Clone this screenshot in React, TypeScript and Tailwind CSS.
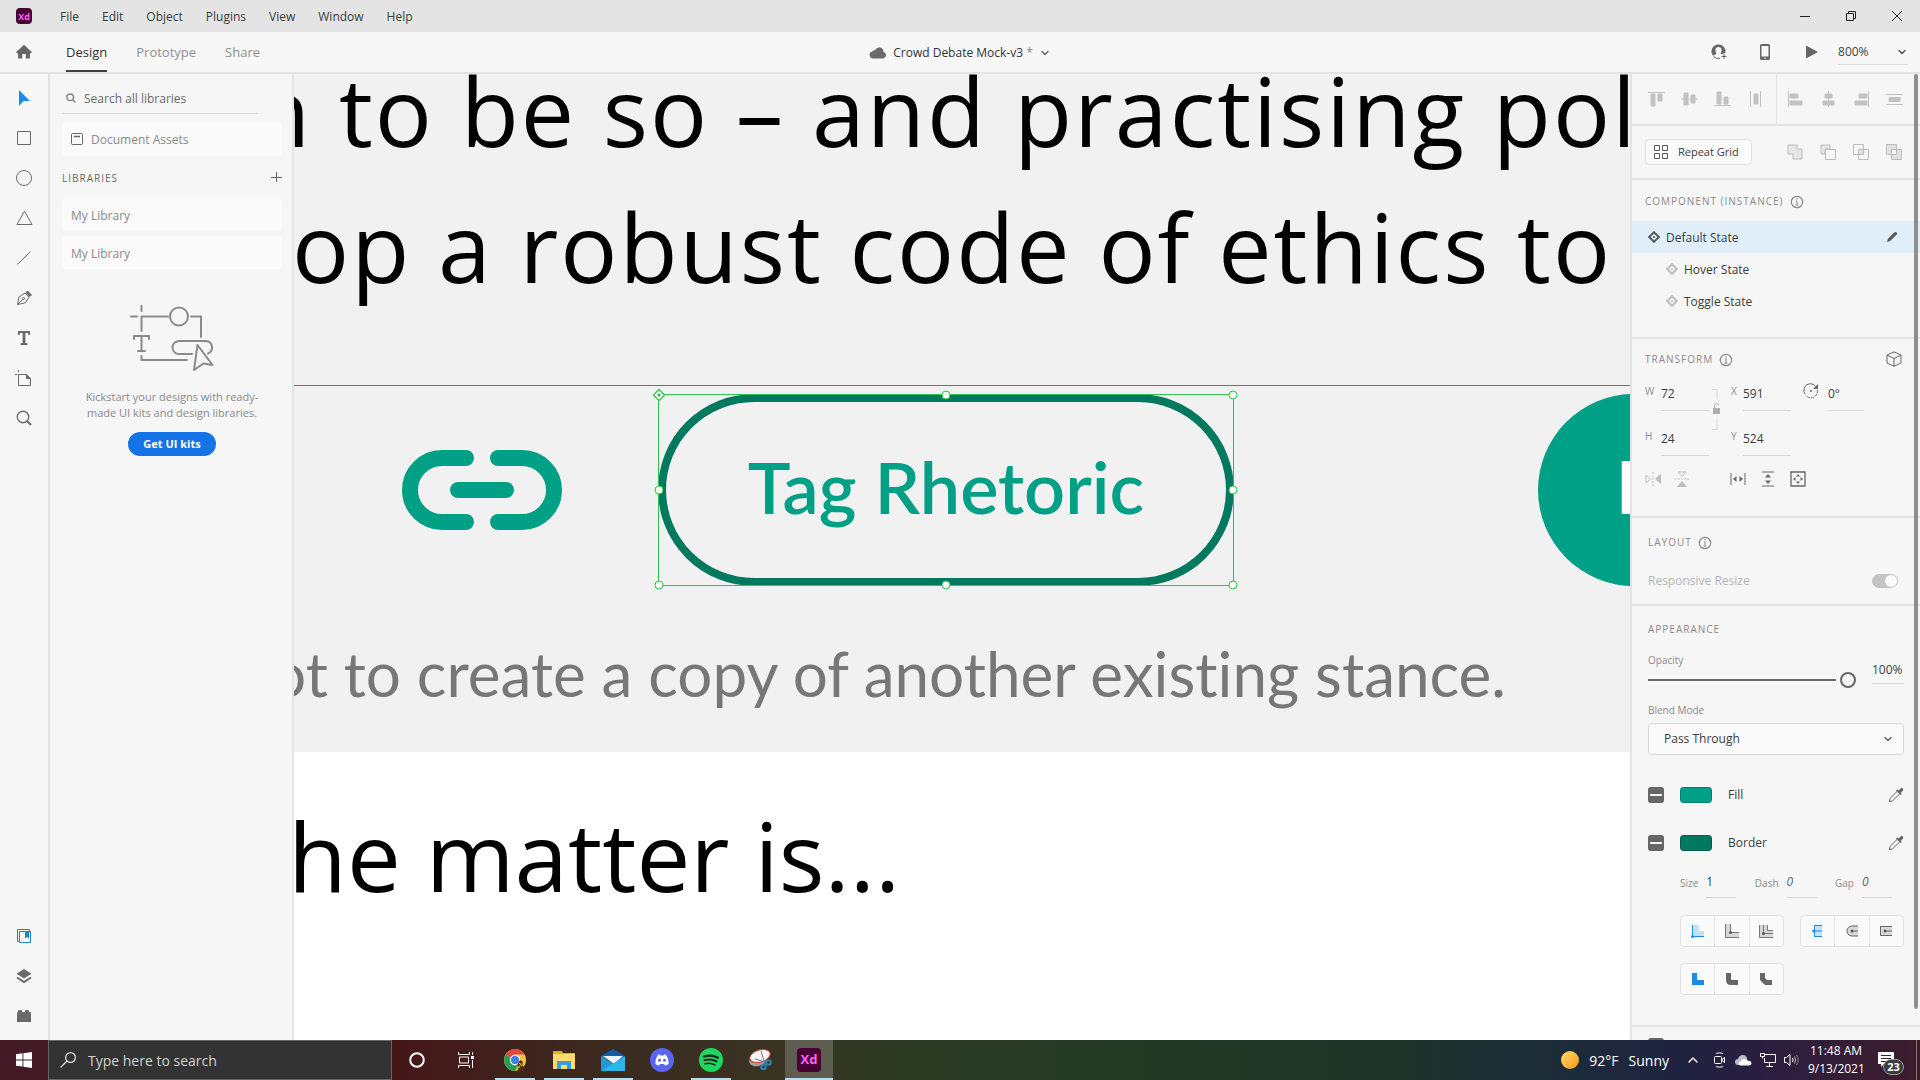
import type { ReactNode } from "react";
import { ChevronDown, ChevronUp } from "lucide-react";

const menus = ["File", "Edit", "Object", "Plugins", "View", "Window", "Help"];

function Info() {
  return (
    <svg className="w-3.5 h-3.5 text-[#8a8a8a]" viewBox="0 0 14 14" fill="none" stroke="currentColor">
      <circle cx="7" cy="7" r="5.7" strokeWidth="1.2" />
      <path d="M6 6h1v4M5.500 10h3" />
      <path d="M6.300 3.900h1.300" strokeWidth="1.300" />
    </svg>
  );
}

function Diamond({ className }: { className: string }) {
  return (
    <svg className={`w-3 h-3 ${className}`} viewBox="0 0 12 12" fill="none" stroke="currentColor">
      <path d="M6 1.200 10.800 6 6 10.800 1.200 6Z" strokeWidth="2" />
      <circle cx="6" cy="6" r="1.100" fill="currentColor" stroke="none" />
    </svg>
  );
}

function XdLogo({ className }: { className: string }) {
  return (
    <span className={`flex items-center justify-center bg-[#470137] text-[#ff61f6] font-bold ${className}`}>Xd</span>
  );
}

function Tool({ label, children }: { label: string; children: ReactNode }) {
  return (
    <button type="button" aria-label={label} className="w-12 h-10 flex items-center justify-center text-[#6a6a6a]">
      <svg className="w-4 h-4 overflow-visible" viewBox="0 0 16 16" fill="none" stroke="currentColor">
        {children}
      </svg>
    </button>
  );
}

function TitleBar() {
  return (
    <header className="h-8 shrink-0 bg-[#e4e4e4] flex items-center pl-4 text-xs text-[#3c3c3c]">
      <XdLogo className="w-4 h-4 rounded-sm text-[9px] leading-none mr-7" />
      <nav className="flex gap-[23px] pt-0.5">
        {menus.map((m) => (
          <button key={m} type="button">{m}</button>
        ))}
      </nav>
      <div className="ml-auto flex text-[#222]">
        <button type="button" aria-label="Minimize" className="w-[46px] h-8 flex items-center justify-center">
          <svg className="w-3 h-3" viewBox="0 0 12 12" stroke="currentColor"><path d="M1 6.500h10" /></svg>
        </button>
        <button type="button" aria-label="Restore" className="w-[46px] h-8 flex items-center justify-center">
          <svg className="w-3 h-3" viewBox="0 0 12 12" fill="none" stroke="currentColor">
            <path d="M1.500 3.500h7v7h-7zM3.500 3.500v-2h7v7h-2" />
          </svg>
        </button>
        <button type="button" aria-label="Close" className="w-[46px] h-8 flex items-center justify-center">
          <svg className="w-3 h-3" viewBox="0 0 12 12" stroke="currentColor"><path d="m1 1 10 10M11 1 1 11" /></svg>
        </button>
      </div>
    </header>
  );
}

function TopBar() {
  return (
    <div className="h-[42px] shrink-0 bg-[#f7f7f7] border-b-2 border-[#e3e3e3] flex justify-between">
      <div className="flex flex-1">
        <button type="button" aria-label="Home" className="w-12 flex items-center justify-center mr-[18px]">
          <svg className="w-4 h-4" viewBox="0 0 16 16" fill="#666">
            <path d="M8 .8 0 8.200l.8.8H2v5.600h4.200V10h3.600v4.600H14V9h1.200l.8-.8L13 5.400z" />
          </svg>
        </button>
        <div className="flex gap-[29px] text-[13px] text-[#8f8f8f]">
          <button type="button" className="text-[#333] border-b-2 border-[#3f3f3f] pt-1">Design</button>
          <button type="button" className="pt-0.5">Prototype</button>
          <button type="button" className="pt-0.5">Share</button>
        </div>
      </div>
      <button type="button" className="flex items-center gap-1.5 ml-3 pt-0.5 text-xs text-[#333]">
        <svg className="w-[18px] h-3.5" viewBox="0 0 18 14" fill="#6a6a6a">
          <path d="M4 12.500A3.500 3.500 0 0 1 3.300 5.600 3 3 0 0 1 6.200 4 4.300 4.300 0 0 1 14.400 5.700 3.500 3.500 0 0 1 14.300 12.500Z" />
        </svg>
        <span>Crowd Debate Mock-v3 <span className="text-[#888]">*</span></span>
        <ChevronDown className="w-3 h-3 text-[#666]" strokeWidth={3} />
      </button>
      <div className="flex flex-1 justify-end items-center text-[#666] pr-3">
        <button type="button" aria-label="Invite" className="mr-[33px]">
          <svg className="w-4 h-4 overflow-visible" viewBox="0 0 16 16" fill="none" stroke="currentColor">
            <path d="M7.500.5a7 7 0 0 0-5.600 11.200c1-.9 2.700-1 3.300-1.700.5-.6-.8-1.500-.8-4 0-2 1.400-3 3.100-3s3.100 1 3.100 3c0 2.500-1.300 3.400-.8 4H12l2.500-1.500A7 7 0 0 0 7.500.5Z" fill="currentColor" stroke="none" />
            <path d="M2.500 12.500A7 7 0 0 0 9 14.300M13 10v5M10.500 12.500h5" />
          </svg>
        </button>
        <button type="button" aria-label="Preview on device" className="mr-9">
          <svg className="w-2.5 h-4" viewBox="0 0 10 16" fill="currentColor">
            <path fillRule="evenodd" d="M1.500 0h7Q10 0 10 1.500v13Q10 16 8.500 16h-7Q0 16 0 14.500v-13Q0 0 1.500 0ZM1.500 2v10.500h7V2Z" />
            <circle cx="5" cy="14.200" r=".8" fill="#fff" />
          </svg>
        </button>
        <button type="button" aria-label="Play" className="mr-5">
          <svg className="w-3 h-3.5" viewBox="0 0 12 14" fill="currentColor"><path d="M0 .5 12 7 0 13.500Z" /></svg>
        </button>
        <button type="button" className="w-[70px] flex justify-between items-center border-b border-[#ddd] pt-1 pb-1 text-xs text-[#444]">
          800%
          <ChevronDown className="w-3 h-3" strokeWidth={2.5} />
        </button>
      </div>
    </div>
  );
}

function ToolStrip() {
  return (
    <aside className="w-[50px] shrink-0 bg-[#f7f7f7] border-r-2 border-[#e3e3e3] flex flex-col pt-1">
      <Tool label="Select"><path d="M3 0v16l4.500-5H14Z" fill="#1b8ce3" stroke="none" /></Tool>
      <Tool label="Rectangle"><path d="M1.500 1.500h13v13h-13z" /></Tool>
      <Tool label="Ellipse"><circle cx="8" cy="8" r="7.500" /></Tool>
      <Tool label="Polygon"><path d="M8.500 1.200 16 14.500H.9Z" /></Tool>
      <Tool label="Line"><path d="M1.500 14.500 14.500 1.500" /></Tool>
      <Tool label="Pen">
        <path d="M1.500 14.500 3 7l6-4 4 4.200-3.700 5.600ZM1.500 14.500 7 9" />
        <circle cx="7.500" cy="8.500" r="1" />
        <path d="m9.500 2.500 2-2L16 5l-2.200 2Z" fill="currentColor" stroke="none" />
      </Tool>
      <Tool label="Text"><path d="M2 1h12v4h-1.500L12 3H9.400v10l2.100.5V15H4.500v-1.500l2.100-.5V3H4l-.5 2H2Z" fill="currentColor" stroke="none" /></Tool>
      <Tool label="Artboard">
        <path d="M2.500 4.500h8l4 4v7h-12zM-1 4.500h2M2.500 0v2" />
        <path d="M10.500 4.500v4h4Z" fill="currentColor" />
      </Tool>
      <Tool label="Zoom"><circle cx="7" cy="7" r="5.700" strokeWidth="1.400" /><path d="m11 11 4 4" strokeWidth="2" /></Tool>
      <div className="mt-auto pb-1">
        <Tool label="Libraries">
          <path d="M3.500 13.500h-2v-12h12v2M3.500 3.500h11v11h-11z" stroke="#1d85c9" />
          <path d="M9 3.500h4v7l-2-1.500-2 1.500Z" fill="#1d85c9" stroke="none" />
        </Tool>
        <Tool label="Layers">
          <path d="M8 1 15.500 5.800 8 10.600.5 5.800Z" fill="currentColor" stroke="none" />
          <path d="m1 9.500 7 4.500 7-4.500" strokeWidth="2" />
        </Tool>
        <Tool label="Plugins">
          <path d="M1 5q0-1 1-1V3q0-1 1-1h2q1 0 1 1v1h3V3q0-1 1-1h2q1 0 1 1v1h1q1 0 1 1v9H1Z" fill="currentColor" stroke="none" />
        </Tool>
      </div>
    </aside>
  );
}

function LibrariesPanel() {
  return (
    <aside className="w-[244px] shrink-0 bg-[#f6f6f6] border-r-2 border-[#e3e3e3] pl-3 pr-2.5 pt-2 text-xs text-[#8a8a8a]">
      <label className="h-8 w-[196px] flex items-center gap-2 border-b border-[#dcdcdc] pl-1">
        <svg className="w-2.5 h-2.5 shrink-0" viewBox="0 0 10 10" fill="none" stroke="#888" strokeWidth="1.500">
          <circle cx="4.200" cy="4.200" r="3.300" /><path d="M6.500 6.500 9.500 9.500" />
        </svg>
        <input aria-label="Search" placeholder="Search all libraries" className="w-full pt-0.5 bg-transparent outline-none placeholder:text-[#6a6a6a]" />
      </label>
      <button type="button" className="mt-2 w-full h-[34px] rounded bg-[#fafafa] flex items-center gap-2 pl-[9px]">
        <svg className="w-3 h-3" viewBox="0 0 12 12" fill="none" stroke="#666">
          <rect x=".5" y=".5" width="11" height="11" rx="1" /><path d="M3 3.500h6" strokeWidth="1.500" />
        </svg>
        <span className="pt-0.5">Document Assets</span>
      </button>
      <div className="h-[42px] flex items-center justify-between">
        <h2 className="pt-1 text-[10px] tracking-widest text-[#6a6a6a]">LIBRARIES</h2>
        <button type="button" aria-label="Add library">
          <svg className="w-3 h-3" viewBox="0 0 12 12" stroke="#666"><path d="M6.500 1v10M1 6.500h11" /></svg>
        </button>
      </div>
      <div className="flex flex-col gap-[5px]">
        <button type="button" className="h-[33px] rounded bg-[#fafafa] text-left pl-[9px] pt-0.5">My Library</button>
        <button type="button" className="h-[33px] rounded bg-[#fafafa] text-left pl-[9px] pt-0.5">My Library</button>
      </div>
      <div className="mt-9 flex flex-col items-center">
        <svg className="w-[84px] h-[66px]" viewBox="0 0 84 66" fill="none" stroke="#8a8a8a" strokeWidth="2" strokeLinecap="round" strokeLinejoin="round">
          <path d="M11.500 1v5M1 11.500h6M11.500 26V11.500H38M61 11.500h10V32M11.500 51v4H57" />
          <circle cx="49" cy="11.500" r="9" />
          <path d="M4 34v-3h15v3M11.500 31v15M8 46h7" />
          <path d="M62 49H49a6.500 6.500 0 0 1 0-13h27a6.500 6.500 0 0 1 2 12.500" />
          <path d="M67.500 40 82.500 60l-9-1.500L64 65Z" fill="#f6f6f6" />
        </svg>
        <p className="mt-[18px] text-[11px] leading-4 text-center">
          Kickstart your designs with ready-<br />made UI kits and design libraries.
        </p>
        <button type="button" className="mt-[11px] h-6 px-[15px] rounded-full bg-[#1473e6] text-white text-[11px] font-bold">Get UI kits</button>
      </div>
    </aside>
  );
}

const handles = [
  "left-1/2 top-0",
  "left-full top-0",
  "left-0 top-1/2",
  "left-full top-1/2",
  "left-0 top-full",
  "left-1/2 top-full",
  "left-full top-full",
];

function Canvas() {
  return (
    <main className="relative flex-1 min-w-0 overflow-hidden bg-white whitespace-pre">
      <div className="absolute inset-x-0 top-0 h-[678px] bg-[#f1f1f1]" />
      <div className="absolute inset-x-0 top-[311px] h-px bg-[#3480c4]" />
      <p className="absolute left-[-42px] top-[-32px] text-[95px] leading-[136px] tracking-[2px] text-black">
        {"n to be so – and practising politics"}
      </p>
      <p className="absolute left-[-2px] top-[104px] text-[95px] leading-[136px] tracking-[2px] text-black">
        {"op a robust code of ethics to"}
      </p>
      <p className="absolute left-[-6px] top-[713px] text-[96px] leading-[136px] text-black">he matter is...</p>

      <svg className="absolute left-[108px] top-[376px] w-40 h-20" viewBox="0 0 160 80" fill="none" stroke="#00a087" strokeWidth="16" strokeLinecap="round">
        <path d="M64 8H40a32 32 0 0 0 0 64h24M96 8h24a32 32 0 0 1 0 64H96M56 40h48" />
      </svg>

      <div className="absolute left-[364px] top-80 w-[576px] h-48 rounded-full border-8 border-[#00795f] flex items-center justify-center pb-2 font-[Lato] font-semibold text-[72px] leading-none text-[#00a087]">
        Tag Rhetoric
      </div>
      <div className="absolute left-[364px] top-80 w-[576px] h-[192px] border border-[#2fc34b]">
        {handles.map((h) => (
          <span key={h} className={`absolute ${h} -translate-1/2 w-[9px] h-[9px] rounded-full bg-white border border-[#2fc34b]`} />
        ))}
        <svg className="absolute left-0 top-0 -translate-1/2 w-3.5 h-3.5" viewBox="0 0 14 14" fill="#fff" stroke="#2fc34b" strokeWidth="1.300">
          <path d="M7 1.500 12.500 7 7 12.500 1.500 7Z" /><circle cx="7" cy="7" r="1" fill="#2fc34b" />
        </svg>
      </div>

      <div className="absolute left-[1244px] top-80 w-[576px] h-48 rounded-full bg-[#00a087] flex items-center pl-[78px] pb-2 font-[Lato] font-bold text-[72px] leading-none text-white">
        Reply
      </div>
      <p className="absolute right-[124px] top-[551px] font-[Lato] text-[62px] leading-[96px] text-[#777] [font-variant-ligatures:none]">
        not to create a copy of another existing stance.
      </p>
    </main>
  );
}

const alignV = [
  { label: "Align top", d: "M0 1.500h17M3 3h4v12H3zM10 3h4v7h-4z" },
  { label: "Align middle", d: "M0 8h17M3 2h4v12H3zM10 4h4v8h-4z" },
  { label: "Align bottom", d: "M0 14.500h17M3 1h4v12H3zM10 6h4v7h-4z" },
  { label: "Distribute horizontally", d: "M3.500 0v16M13.500 0v16M7 3h4v10H7z" },
];
const alignH = [
  { label: "Align left", d: "M1.500 0v16M3 3h8v4H3zM3 10h12v4H3z" },
  { label: "Align center", d: "M8.500 0v16M5 3h7v4H5zM3 10h11v4H3z" },
  { label: "Align right", d: "M15.500 0v16M6 3h8v4H6zM2 10h12v4H2z" },
  { label: "Distribute vertically", d: "M0 3.500h17M0 13.500h17M3 6.500h11v4H3z" },
];

function AlignGroup({ items }: { items: { label: string; d: string }[] }) {
  return (
    <div className="flex gap-4">
      {items.map((i) => (
        <button key={i.label} type="button" aria-label={i.label}>
          <svg className="w-[17px] h-4" viewBox="0 0 17 16" fill="#c2c2c2" stroke="#c2c2c2"><path d={i.d} /></svg>
        </button>
      ))}
    </div>
  );
}

function Field({ label, value, labelWidth }: { label: string; value: string; labelWidth: string }) {
  return (
    <label className="flex items-start text-[10px] leading-4 text-[#8f8f8f]">
      <span className={`shrink-0 ${labelWidth}`}>{label}</span>
      <input defaultValue={value} className="w-12 h-7 pb-1.5 bg-transparent border-b border-[#d8d8d8] outline-none text-xs text-[#3c3c3c]" />
    </label>
  );
}

function PaintRow({ label, swatch }: { label: string; swatch: string }) {
  return (
    <div className="h-12 flex items-center">
      <label className="flex items-center gap-4 text-xs text-[#3c3c3c]">
        <span className="relative w-4 h-4 rounded-[3px] bg-[#666] flex items-center justify-center">
          <input type="checkbox" defaultChecked className="absolute inset-0 opacity-0" />
          <span className="w-3 h-0.5 bg-white" />
        </span>
        <span className={`w-8 h-4 rounded-sm border border-black/20 ${swatch}`} />
        {label}
      </label>
      <button type="button" aria-label={`Pick ${label.toLowerCase()} colour`} className="ml-auto">
        <svg className="w-4 h-4" viewBox="0 0 16 16" fill="none" stroke="#666">
          <path d="M9 4.500 2.200 11.300 1.300 14.700 4.700 13.800 11.500 7" />
          <path d="M8 3.500 9.200 2.400 10.500 3.600 12.500 1.500Q14 .5 15 1.600 15.800 2.600 14.700 3.900L12.700 5.800 13.700 7 12.500 8.100Z" fill="#666" stroke="none" />
        </svg>
      </button>
    </div>
  );
}

function DashField({ label, value, className }: { label: string; value: string; className: string }) {
  return (
    <label className="flex gap-2">
      {label}
      <input defaultValue={value} className={`w-[30px] h-7 pb-1 bg-transparent border-b border-[#d8d8d8] outline-none text-xs ${className}`} />
    </label>
  );
}

function IconGroup({ items }: { items: { label: string; icon: ReactNode }[] }) {
  return (
    <div className="flex h-8 w-[104px] rounded border border-[#e0e0e0] bg-[#fafafa] divide-x divide-[#e0e0e0]">
      {items.map((i) => (
        <button key={i.label} type="button" aria-label={i.label} className="flex-1 flex items-center justify-center">
          <svg className="w-3.5 h-3.5" viewBox="0 0 14 14" fill="none">{i.icon}</svg>
        </button>
      ))}
    </div>
  );
}

const strokeAlign = [
  { label: "Inner stroke", icon: <><path d="M1 1h7v6h5v6H1z" fill="#c5e1f7" /><path d="M1.500 1v11.500H13" stroke="#1b8ce3" /><circle cx="1.500" cy="12.500" r="1.500" fill="#1b8ce3" /></> },
  { label: "Outer stroke", icon: <><path d="M0 0h5v9h9v5H0z" fill="#d8d8d8" /><path d="M.5 0v13.500H14M5.500 0v8.500H14" stroke="#777" /><circle cx="5.500" cy="8.500" r="1.500" fill="#555" /></> },
  { label: "Center stroke", icon: <><path d="M0 1h8v5h6v8H0z" fill="#d8d8d8" /><path d="M.5 1v12.500H14M4.500 1v8.500H14M8.500 1v5.500H14" stroke="#777" /><circle cx="4.500" cy="9.500" r="1.500" fill="#555" /></> },
];
const caps = [
  { label: "Butt cap", icon: <><path d="M3 1h8v12H3z" fill="#c5e1f7" /><path d="M11 1.500H3.500v11H11M1 7h10" stroke="#1b8ce3" /><circle cx="3" cy="7" r="1.500" fill="#1b8ce3" /></> },
  { label: "Round cap", icon: <><path d="M13 2H7a5 5 0 0 0 0 10h6Z" fill="#d8d8d8" /><path d="M13 2H7a5 5 0 0 0 0 10h6M7 7h6" stroke="#666" /><circle cx="7" cy="7" r="1.500" fill="#555" /></> },
  { label: "Projecting cap", icon: <><path d="M1 2h12v10H1z" fill="#d8d8d8" /><path d="M13 2.500H1.500v9H13M6 7h7" stroke="#666" /><circle cx="6" cy="7" r="1.500" fill="#555" /></> },
];
const joins = [
  { label: "Miter join", icon: <path d="M1 1h5v7h7v5H1z" fill="#1b8ce3" /> },
  { label: "Round join", icon: <path d="M1 1h5v6q0 1 1 1h6v5H6q-5 0-5-5z" fill="#666" /> },
  { label: "Bevel join", icon: <path d="M1 1h5v5l2 2h5v5H6L1 8z" fill="#666" /> },
];

function PropertyPanel() {
  const heading = "flex items-center gap-1.5 pt-0.5 text-[10px] tracking-widest text-[#8a8a8a]";
  return (
    <aside className="relative w-[290px] shrink-0 overflow-hidden bg-[#f6f6f6] border-l-2 border-[#e3e3e3] text-xs text-[#3c3c3c]">
      <div className="h-[52px] border-b-2 border-[#e3e3e3] flex items-center">
        <div className="w-[145px] h-full border-r border-[#e3e3e3] flex items-center pl-4"><AlignGroup items={alignV} /></div>
        <div className="pl-2.5"><AlignGroup items={alignH} /></div>
      </div>

      <div className="h-[54px] border-b-2 border-[#e3e3e3] flex items-center justify-between pl-[13px] pr-[18px]">
        <button type="button" className="h-[26px] w-[107px] rounded border border-[#dedede] bg-[#fbfbfb] flex items-center gap-2.5 pl-2 text-[11px]">
          <svg className="w-3.5 h-3.5" viewBox="0 0 14 14" fill="none" stroke="#555">
            <path d="M.5.5h5v5h-5zM8.500.5h5v5h-5zM.5 8.500h5v5h-5zM8.500 8.500h5v5h-5z" />
          </svg>
          Repeat Grid
        </button>
        <div className="flex gap-[17px]">
          <button type="button" aria-label="Add">
            <svg className="w-4 h-4" viewBox="0 0 16 16" fill="#e6e6e6" stroke="#bdbdbd"><path d="M1 1h9v4h5v10H6v-5H1z" /></svg>
          </button>
          <button type="button" aria-label="Subtract">
            <svg className="w-4 h-4" viewBox="0 0 16 16" fill="#e6e6e6" stroke="#bdbdbd"><path d="M1 1h9v4H5v5H1z" /><path d="M5.500 5.500h10v10h-10z" fill="none" /></svg>
          </button>
          <button type="button" aria-label="Intersect">
            <svg className="w-4 h-4" viewBox="0 0 16 16" fill="none" stroke="#bdbdbd"><path d="M.5.5h10v10H.5zM5.500 5.500h10v10h-10z" /><path d="M5.500 5.500h5v5h-5z" fill="#e0e0e0" /></svg>
          </button>
          <button type="button" aria-label="Exclude overlap">
            <svg className="w-4 h-4" viewBox="0 0 16 16" fill="#e0e0e0" stroke="#bdbdbd"><path d="M.5.5h10v10H.5zM5.500 5.500h10v10h-10z" /><path d="M5.500 5.500h5v5h-5z" fill="#f6f6f6" /></svg>
          </button>
        </div>
      </div>

      <section className="h-[159px] border-b-2 border-[#e3e3e3]">
        <h2 className={`${heading} h-[41px] pl-[13px]`}>COMPONENT (INSTANCE) <Info /></h2>
        <div className="h-8 bg-[#e0eefa] flex items-center pl-4 pr-[22px]">
          <Diamond className="text-[#5a5a5a] mr-1.5" />
          <span className="pt-0.5">Default State</span>
          <button type="button" aria-label="Edit main component" className="ml-auto">
            <svg className="w-3 h-3" viewBox="0 0 12 12" fill="#5a5a5a"><path d="M1 11 2 7.800 8.500 1.300Q9.500.5 10.700 1.400 11.700 2.500 10.700 3.500L4.200 10Z" /></svg>
          </button>
        </div>
        <div className="h-8 flex items-center pl-[34px]"><Diamond className="text-[#bdbdbd] mr-1.5" /><span className="pt-0.5">Hover State</span></div>
        <div className="h-8 flex items-center pl-[34px]"><Diamond className="text-[#bdbdbd] mr-1.5" /><span className="pt-0.5">Toggle State</span></div>
      </section>

      <section className="h-[179px] border-b-2 border-[#e3e3e3] pl-[13px] pr-[18px]">
        <div className="h-[38px] flex items-center justify-between pt-0.5">
          <h2 className={heading}>TRANSFORM <Info /></h2>
          <button type="button" aria-label="3D transforms">
            <svg className="w-4 h-4" viewBox="0 0 16 16" fill="none" stroke="#666">
              <path d="M8 .8 15 4v8l-7 3.300L1 12V4ZM1 4l7 3.500L15 4M8 7.500v7.800" />
            </svg>
          </button>
        </div>
        <div className="mt-1.5 flex">
          <div className="flex flex-col gap-[17px]">
            <Field label="W" value="72" labelWidth="w-4" />
            <Field label="H" value="24" labelWidth="w-4" />
          </div>
          <svg className="w-3 h-11 mt-1 mr-2 ml-0.5" viewBox="0 0 12 44" fill="none" stroke="#d8d8d8">
            <path d="M1 2.500h5v10M1 42.500h5v-10" />
            <rect x="2" y="21" width="7" height="6" fill="#b0b0b0" stroke="none" />
            <path d="M3.500 21v-2.500a2 2 0 0 1 4 0" stroke="#b0b0b0" />
          </svg>
          <div className="flex flex-col gap-[17px]">
            <Field label="X" value="591" labelWidth="w-3" />
            <Field label="Y" value="524" labelWidth="w-3" />
          </div>
          <label className="flex items-start ml-2.5">
            <svg className="w-4 h-4 mr-[9px] ml-0.5" viewBox="0 0 16 16" fill="none" stroke="#666">
              <path d="M2 11A6.500 6.500 0 0 1 13 3.700" />
              <path d="M14.300 7A6.500 6.500 0 0 1 3 12.500" strokeDasharray="3 1" />
              <path d="M15 1v5h-5Z" fill="#666" stroke="none" />
              <circle cx="8" cy="8" r="1" fill="#666" stroke="none" />
            </svg>
            <input aria-label="Rotation" defaultValue="0°" className="w-9 h-7 pb-1.5 bg-transparent border-b border-[#d8d8d8] outline-none" />
          </label>
        </div>
        <div className="mt-[15px] flex items-center">
          <button type="button" aria-label="Flip horizontally" className="mr-[13px]">
            <svg className="w-4 h-4" viewBox="0 0 16 16" fill="none" stroke="#bdbdbd"><path d="M1 4v8l4.500-4Z" /><path d="M15.500 3.500v9L10.500 8Z" fill="#bdbdbd" /><path d="M8 1v14" strokeDasharray="2 1" /></svg>
          </button>
          <button type="button" aria-label="Flip vertically" className="mr-10">
            <svg className="w-4 h-4" viewBox="0 0 16 16" fill="none" stroke="#bdbdbd"><path d="M4 1h8L8 5.500Z" /><path d="M3.500 15.500h9L8 10.500Z" fill="#bdbdbd" /><path d="M1 8h14" strokeDasharray="2 1" /></svg>
          </button>
          <button type="button" aria-label="Fixed width" className="mr-3.5">
            <svg className="w-4 h-4" viewBox="0 0 16 16" fill="#666" stroke="#666"><path d="M1 2v12M15 2v12" /><path d="M6.500 5v6L3 8ZM9.500 5v6L13 8Z" stroke="none" /></svg>
          </button>
          <button type="button" aria-label="Fixed height" className="mr-3.5">
            <svg className="w-4 h-4" viewBox="0 0 16 16" fill="#666" stroke="#666"><path d="M2 1h12M2 15h12" /><path d="M5 6.500h6L8 3ZM5 9.500h6L8 13Z" stroke="none" /></svg>
          </button>
          <button type="button" aria-label="Fit content">
            <svg className="w-4 h-4" viewBox="0 0 16 16" fill="#666" stroke="#666"><path d="M1 1h14v14H1z" fill="none" strokeWidth="1.300" /><path d="M6 5.500h4L8 3ZM6 10.500h4L8 13ZM5.500 6v4L3 8ZM10.500 6v4L13 8Z" stroke="none" /></svg>
          </button>
        </div>
      </section>

      <section className="h-[88px] border-b-2 border-[#e3e3e3] pl-4 pr-[22px]">
        <h2 className={`${heading} h-12`}>LAYOUT <Info /></h2>
        <label className="h-[30px] flex items-center justify-between text-[#b5b5b5]">
          Responsive Resize
          <span className="relative w-[26px] h-3.5 rounded-full bg-[#c4c4c4] border border-[#c4c4c4] flex justify-end items-center">
            <input type="checkbox" disabled defaultChecked className="absolute inset-0 opacity-0" />
            <span className="w-3 h-3 rounded-full bg-[#fafafa]" />
          </span>
        </label>
      </section>

      <section className="h-[421px] border-b-2 border-[#e3e3e3] pl-4 pr-4">
        <h2 className={`${heading} h-[46px]`}>APPEARANCE</h2>
        <div className="flex justify-between text-[10px] text-[#8a8a8a]">
          <label className="w-[208px]">
            <span className="block leading-4">Opacity</span>
            <span className="relative flex items-center h-6">
              <span className="w-[188px] h-0.5 bg-[#6a6a6a]" />
              <span className="ml-1 w-4 h-4 rounded-full border-2 border-[#666]" />
              <input type="range" defaultValue={100} className="absolute inset-0 opacity-0" />
            </span>
          </label>
          <input aria-label="Opacity value" defaultValue="100%" className="mt-1 w-8 h-7 bg-transparent border-b border-[#d8d8d8] outline-none text-xs text-[#3c3c3c]" />
        </div>
        <label className="relative block mt-2 text-[10px] leading-5 text-[#8a8a8a]">
          Blend Mode
          <select className="block appearance-none w-full h-8 mt-[3px] rounded border border-[#d8d8d8] bg-[#fafafa] pl-[15px] text-xs text-[#3c3c3c]">
            <option>Pass Through</option>
          </select>
          <ChevronDown className="absolute right-2.5 bottom-2.5 w-3 h-3 text-[#555]" strokeWidth={2.5} />
        </label>
        <div className="mt-4">
          <PaintRow label="Fill" swatch="bg-[#00a087]" />
          <PaintRow label="Border" swatch="bg-[#00795f]" />
        </div>
        <div className="mt-[3px] pl-8 pr-3 flex justify-between text-[10px] leading-[26px] text-[#8a8a8a]">
          <DashField label="Size" value="1" className="text-[#3c3c3c]" />
          <DashField label="Dash" value="0" className="italic text-[#666]" />
          <DashField label="Gap" value="0" className="italic text-[#666]" />
        </div>
        <div className="mt-[17px] pl-8 flex flex-wrap gap-4">
          <IconGroup items={strokeAlign} />
          <IconGroup items={caps} />
          <IconGroup items={joins} />
        </div>
      </section>
      <div className="ml-4 mt-[11px] w-4 h-4 rounded-[3px] bg-[#666]" />
      <div className="absolute right-0.5 top-0 bottom-[31px] w-1 rounded-full bg-[#8f8f8f]" />
    </aside>
  );
}

function TaskApp({ label, open, active, children }: { label: string; open?: boolean; active?: boolean; children: ReactNode }) {
  return (
    <button
      type="button"
      aria-label={label}
      className={`relative w-12 mr-px h-full flex items-center justify-center ${active ? "bg-white/20" : ""}`}
    >
      {children}
      {open && <span className={`absolute bottom-0 h-0.5 bg-[#b3dcf5] ${active ? "inset-x-0" : "inset-x-1"}`} />}
    </button>
  );
}

function Taskbar() {
  return (
    <footer className="h-10 shrink-0 flex bg-[linear-gradient(90deg,#451a28_0%,#451818_21%,#3a2b20_32%,#3a3322_40%,#2d3b24_47%,#223a25_60%,#1e3328_72%,#1b2c38_81%,#1e2440_87%,#2b1e40_92%,#3d1c2c_100%)] text-white">
      <button type="button" aria-label="Start" className="w-12 flex items-center justify-center">
        <svg className="w-4 h-4" viewBox="0 0 16 16" fill="#fff"><path d="M0 2.200 6.500 1.300v6.200H0ZM7.400 1.200 16 0v7.500H7.400ZM0 8.400h6.500v6.200L0 13.700ZM7.400 8.400H16V16l-8.600-1.200Z" /></svg>
      </button>
      <label className="w-[344px] mr-px border border-[#666] bg-[#333] flex items-center pl-[11px] gap-3">
        <svg className="w-4 h-4 shrink-0" viewBox="0 0 16 16" fill="none" stroke="#e0e0e0" strokeWidth="1.200"><circle cx="10.500" cy="5.500" r="4.900" /><path d="M7 9 .5 15.500" /></svg>
        <input aria-label="Search Windows" placeholder="Type here to search" className="w-full bg-transparent outline-none text-[14px] placeholder:text-[#d0d0d0]" />
      </label>
      <TaskApp label="Cortana">
        <svg className="w-4 h-4" viewBox="0 0 16 16" fill="none" stroke="#fff" strokeWidth="2"><circle cx="8" cy="8" r="6.800" /></svg>
      </TaskApp>
      <TaskApp label="Task view">
        <svg className="w-4 h-4" viewBox="0 0 16 16" fill="none" stroke="#fff"><path d="M.5 0v2.500h11V0M.5 16v-2.500h11V16M1.500 5h9v6h-9zM14.500 0v3M14.500 8v8" /><path d="M13 4h3v3h-3z" fill="#fff" stroke="none" /></svg>
      </TaskApp>
      <TaskApp label="Chrome" open>
        <svg className="w-6 h-6" viewBox="0 0 24 24">
          <circle cx="12" cy="12" r="11" fill="#f6c33c" />
          <path d="M12 12 2.500 6.500A11 11 0 0 1 21.500 6.500H12Z" fill="#dc4b3e" />
          <path d="M2.500 6.500A11 11 0 0 0 12 23l4.500-8L12 12Z" fill="#2a9d55" />
          <circle cx="12" cy="12" r="5.200" fill="#fff" /><circle cx="12" cy="12" r="4.200" fill="#3f7fe8" />
          <path d="M17 12l3 2-1 3 2 2-1 4-2-2-2 3-2-1 2-4-2-2Z" fill="#4a3210" /><path d="m16 15 3 3m-1-3-2 5" stroke="#d8a33a" />
        </svg>
      </TaskApp>
      <TaskApp label="File Explorer" open>
        <svg className="w-6 h-6" viewBox="0 0 24 24"><path d="M1 3h9l1 2h12v15H1Z" fill="#e8a823" /><path d="M1 6h22v15H1Z" fill="#fddb6e" /><path d="M5 21v-8h14v8h-4v-4H9v4Z" fill="#3a9be0" /></svg>
      </TaskApp>
      <TaskApp label="Mail" open>
        <svg className="w-6 h-6" viewBox="0 0 24 24"><path d="M0 8 12 1l12 7v3H0Z" fill="#0f5cab" /><path d="M2 8h20l-9 8Z" fill="#f2f5f8" /><path d="m0 8 13 8-13 7Z" fill="#2396dc" /><path d="M24 8 0 23h24Z" fill="#2fb2ee" /></svg>
      </TaskApp>
      <TaskApp label="Discord">
        <svg className="w-6 h-6" viewBox="0 0 24 24"><circle cx="12" cy="12" r="12" fill="#5865f2" /><path d="M8 6.800 10 6.500l.5 1h3l.5-1 2 .3q3 4.500 2.700 9Q17 17.400 15 17.500l-1-1.500h-4l-1 1.500q-2-.1-3.700-1.700Q5 11 8 6.800Z" fill="#fff" /><circle cx="9.500" cy="12.300" r="1.500" fill="#5865f2" /><circle cx="14.500" cy="12.300" r="1.500" fill="#5865f2" /></svg>
      </TaskApp>
      <TaskApp label="Spotify" open>
        <svg className="w-6 h-6" viewBox="0 0 24 24" fill="none" stroke="#17241b" strokeLinecap="round"><circle cx="12" cy="12" r="12" fill="#1ed760" stroke="none" /><path d="M5 8.500q7.500-2.200 14 1.300" strokeWidth="2.200" /><path d="M5.500 12.200q6.500-1.800 12 1.200" strokeWidth="1.900" /><path d="M6 15.700q5.500-1.400 10 1.100" strokeWidth="1.500" /></svg>
      </TaskApp>
      <TaskApp label="Snipping Tool">
        <svg className="w-6 h-6" viewBox="0 0 24 24" fill="none"><ellipse cx="10" cy="12" rx="9" ry="6" transform="rotate(-18 10 12)" fill="#a89a98" /><ellipse cx="12" cy="8" rx="10.500" ry="6" transform="rotate(-18 12 8)" fill="#f4f4f4" stroke="#c8413f" /><path d="M13 3 17 16M7 11l10 3" stroke="#777" /><circle cx="15.500" cy="19" r="2.300" stroke="#2d83bd" strokeWidth="2" /><circle cx="20.500" cy="14.500" r="2.300" stroke="#2d83bd" strokeWidth="2" /></svg>
      </TaskApp>
      <TaskApp label="Adobe XD" open active><XdLogo className="w-6 h-6 rounded text-[13px]" /></TaskApp>

      <div className="ml-auto flex items-center pr-[3px]">
        <button type="button" className="flex items-center gap-2.5 text-[14px] mr-4">
          <span className="w-[18px] h-[18px] rounded-full bg-linear-to-br from-[#ffdc62] to-[#f99312]" />
          <span>92°F</span>
          <span>Sunny</span>
        </button>
        <button type="button" aria-label="Show hidden icons" className="mr-3"><ChevronUp className="w-4 h-4" strokeWidth={2} /></button>
        <svg className="w-3.5 h-4 mr-2" viewBox="0 0 14 16" fill="none" stroke="#fff"><rect x="1.500" y="4.500" width="7" height="7" rx="1" /><path d="m8.500 8 3-2.500v5ZM3 1.500q4-1.500 7 0M3 14.500q4 1.500 7 0" /></svg>
        <svg className="w-[17px] h-3 mr-2" viewBox="0 0 17 12"><path d="M3 11A3 3 0 0 1 3 5Q4 1 8 1q3 0 4 3l1 7Z" fill="#b8bcc4" /><path d="M5 11.500A2.500 2.500 0 0 1 5.500 7Q9 3.500 12 6.500 16.500 6.500 16.500 9.500 16 11.500 14 11.500Z" fill="#fff" /></svg>
        <svg className="w-4 h-4 mr-2" viewBox="0 0 16 16" fill="none" stroke="#fff"><path d="M5 2.500h10.500v8H4.500V6M9.500 10.500V14M6 14.500h7M.5 1.500h4v3h-4zM2.500 4.500v2" /></svg>
        <svg className="w-4 h-4 mr-2" viewBox="0 0 16 16" fill="none" stroke="#fff"><path d="M.5 5.500h2L6 2.500v11l-3.500-3h-2ZM8.500 6q1.200 2 0 4" /><path d="M10.500 4.500q2.300 3.500 0 7" stroke="#bbb" /><path d="M12.500 3q3.500 5 0 10" stroke="#888" /></svg>
        <div className="w-[56px] text-[12px] leading-[18px] text-center mr-3.5 whitespace-nowrap">
          <div>11:48 AM</div>
          <div>9/13/2021</div>
        </div>
        <button type="button" aria-label="Notifications" className="relative w-4 h-4 mr-[22px]">
          <svg className="w-4 h-4" viewBox="0 0 16 16"><path d="M0 0h16v12H6l-3 3v-3H0Z" fill="#fff" /><path d="M3 3.500h10M3 6.500h10M3 9.500h6" stroke="#33203a" /></svg>
          <span className="absolute left-[5px] top-[7px] w-[21px] h-4 rounded-full bg-[#3c3c3c] border border-[#999] text-[11px] leading-[14px] font-bold text-center">23</span>
        </button>
        <span className="w-px h-10 bg-white/40" />
      </div>
    </footer>
  );
}

export default function App() {
  return (
    <div className="h-screen w-full flex flex-col overflow-hidden font-['Open_Sans','Noto_Sans',sans-serif]">
      <TitleBar />
      <TopBar />
      <div className="flex-1 min-h-0 flex">
        <ToolStrip />
        <LibrariesPanel />
        <Canvas />
        <PropertyPanel />
      </div>
      <Taskbar />
    </div>
  );
}
